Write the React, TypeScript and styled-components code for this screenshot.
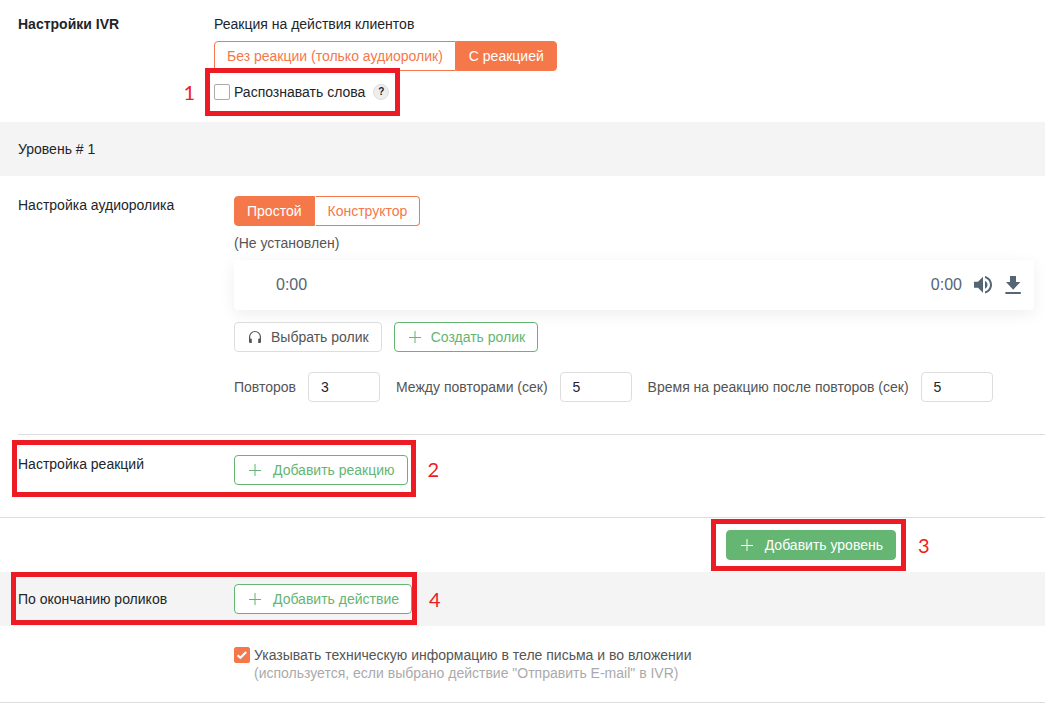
import React, { useState } from "react";
import styled, { createGlobalStyle, css } from "styled-components";

const color = {
  orange: "#f5784b",
  green: "#65b573",
  text: "#212529",
  muted: "#555555",
  hint: "#aaaaaa",
  line: "#dddddd",
  band: "#f4f4f4",
  player: "#566574",
  mark: "#ed1c24",
};

const GlobalStyle = createGlobalStyle`
  *, *::before, *::after { box-sizing: border-box; }
  body {
    margin: 0;
    background: #fff;
    color: ${color.text};
    font-family: "Liberation Sans", Arial, sans-serif;
    font-size: 14px;
    line-height: 18px;
  }
  button, input { font: inherit; color: inherit; margin: 0; }
  h1, h2, p { margin: 0; font-size: inherit; font-weight: inherit; }
`;

const Page = styled.main`
  min-width: 0;
`;

const Intro = styled.section`
  display: flex;
  padding: 15px 18px 21px;
`;

const Title = styled.h1`
  && {
    flex: 0 0 196px;
    font-weight: bold;
  }
`;

const IntroBody = styled.div`
  display: flex;
  flex-direction: column;
  align-items: flex-start;
`;

const WordsSlot = styled.div`
  display: flex;
  margin-top: 12px;
`;

const LevelBand = styled.header`
  padding: 18px;
  background: ${color.band};
`;

const Section = styled.section`
  display: flex;
  margin-left: 18px;
  padding: 20px 11px 32px 0;
`;

const AudioSection = styled(Section)`
  border-bottom: 1px solid ${color.line};
`;

const RowLabel = styled.h2`
  flex: 0 0 216px;
`;

const AudioBody = styled.div`
  flex: 1;
  min-width: 0;
  color: ${color.muted};
`;

const Segments = styled.div`
  display: flex;
`;

const IntroSegments = styled(Segments)`
  margin-top: 8px;
`;

const Segment = styled.button<{ $active: boolean }>`
  height: 30px;
  padding: 0 12px;
  border: 1px solid ${color.orange};
  background: ${(p) => (p.$active ? color.orange : "#fff")};
  color: ${(p) => (p.$active ? "#fff" : color.orange)};
  cursor: pointer;

  &:first-child { border-radius: 4px 0 0 4px; }
  &:last-child { border-radius: 0 4px 4px 0; }
  &:last-child:not([aria-pressed="true"]) { border-left-color: #fff; }
`;

const ClipName = styled.p`
  && { margin: 8px 0; }
`;

const Player = styled.div`
  display: flex;
  align-items: center;
  height: 50px;
  padding: 0 12px 0 42px;
  border-radius: 4px;
  background: #fff;
  box-shadow: 0 4px 16px rgba(0, 0, 0, 0.07);
  color: ${color.player};
  font-size: 16px;
`;

const Duration = styled.span`
  margin-left: auto;
`;

const IconButton = styled.button`
  display: flex;
  margin-left: 12px;
  padding: 0;
  border: 0;
  background: none;
  cursor: pointer;
`;

const ClipActions = styled.div`
  display: flex;
  gap: 12px;
  margin-top: 12px;
`;

type Tone = "plain" | "outline" | "solid";

const tones = {
  plain: css`
    border-color: ${color.line};
    background: #fff;
    color: ${color.muted};
  `,
  outline: css`
    border-color: ${color.green};
    background: #fff;
    color: ${color.green};
  `,
  solid: css`
    border-color: ${color.green};
    background: ${color.green};
    color: #fff;
  `,
};

const ActionButton = styled.button<{ $tone: Tone }>`
  display: inline-flex;
  align-items: center;
  gap: 8px;
  height: 30px;
  padding: 0 12px;
  border: 1px solid;
  border-radius: 4px;
  white-space: nowrap;
  cursor: pointer;
  ${(p) => tones[p.$tone]}
`;

const AddButton = styled(ActionButton)`
  gap: 10px;
`;

const Fields = styled.div`
  display: flex;
  flex-wrap: wrap;
  gap: 12px 16px;
  margin-top: 20px;
`;

const Field = styled.label`
  display: flex;
  align-items: center;
  gap: 12px;
`;

const NumberBox = styled.input`
  width: 72px;
  height: 30px;
  padding: 0 12px;
  border: 1px solid ${color.line};
  border-radius: 4px;
  background: #fff;
  color: ${color.text};
`;

const ReactionSection = styled.section`
  padding: 20px 18px 32px;
  border-bottom: 1px solid ${color.line};
`;

const AddLevelRow = styled.div`
  display: flex;
  justify-content: flex-end;
  padding: 12px 149px 12px 18px;
`;

const FinishBand = styled.section`
  padding: 12px 18px;
  background: ${color.band};
`;

const SettingRow = styled.div<{ $align: string }>`
  display: flex;
  align-items: ${(p) => p.$align};
`;

const TechInfo = styled.section`
  padding: 20px 18px 20px 234px;
  border-bottom: 1px solid ${color.line};
  color: ${color.muted};
`;

const CheckLabel = styled.label`
  display: inline-flex;
  align-items: flex-start;
  gap: 4px;
  cursor: pointer;
`;

const CheckFrame = styled.span`
  position: relative;
  display: flex;
  padding: 1px 0;
`;

const CheckInput = styled.input`
  appearance: none;
  width: 16px;
  height: 16px;
  border: 1px solid #aaaaaa;
  border-radius: 2px;
  background: #fff;

  &:checked {
    border-color: ${color.orange};
    background: ${color.orange};
  }
`;

const CheckMark = styled.svg`
  position: absolute;
  top: 1px;
  left: 0;
  pointer-events: none;
`;

const Hint = styled.span`
  display: block;
  color: ${color.hint};
`;

const HelpButton = styled.button`
  width: 16px;
  height: 16px;
  margin: 1px 0 1px 8px;
  padding: 0;
  border: 1px solid ${color.line};
  border-radius: 50%;
  background: #eeeeee;
  font-size: 10px;
  font-weight: bold;
  line-height: 14px;
  cursor: help;
`;

const Callout = styled.div`
  position: relative;
  display: flex;
`;

type Inset = { $top: number; $right: number; $bottom: number; $left: number };

const CalloutFrame = styled.div<Inset>`
  position: absolute;
  top: -${(p) => p.$top}px;
  right: -${(p) => p.$right}px;
  bottom: -${(p) => p.$bottom}px;
  left: -${(p) => p.$left}px;
  border: 5px solid ${color.mark};
  pointer-events: none;
`;

const CalloutNumber = styled.span<{ $before?: boolean }>`
  position: absolute;
  top: 50%;
  ${(p) => (p.$before ? "right: calc(100% + 15px);" : "left: calc(100% + 17px);")}
  transform: translateY(-50%);
  color: ${color.mark};
  font-family: Lato, sans-serif;
  font-size: 20px;
  line-height: 24px;
`;

function Marked(props: {
  number: number;
  inset: [number, number, number, number];
  before?: boolean;
  children: React.ReactNode;
}) {
  const [top, right, bottom, left] = props.inset;
  return (
    <Callout>
      {props.children}
      <CalloutFrame $top={top} $right={right} $bottom={bottom} $left={left}>
        <CalloutNumber $before={props.before}>{props.number}</CalloutNumber>
      </CalloutFrame>
    </Callout>
  );
}

function Check(props: { checked: boolean; onChange: (v: boolean) => void; children: React.ReactNode }) {
  return (
    <CheckLabel>
      <CheckFrame>
        <CheckInput
          type="checkbox"
          checked={props.checked}
          onChange={(e) => props.onChange(e.target.checked)}
        />
        {props.checked && (
          <CheckMark width="16" height="16" viewBox="0 0 16 16" aria-hidden="true">
            <path d="M3.6 8.2l2.8 2.6 5.8-5.8" fill="none" stroke="#fff" strokeWidth="2.2" />
          </CheckMark>
        )}
      </CheckFrame>
      <span>{props.children}</span>
    </CheckLabel>
  );
}

const PlusIcon = () => (
  <svg width="16" height="16" viewBox="0 0 16 16" aria-hidden="true">
    <path d="M8 2v12" stroke="currentColor" strokeWidth="2" opacity="0.5" />
    <path d="M2 8.5h12" stroke="currentColor" strokeWidth="1" />
  </svg>
);

const HeadphonesIcon = () => (
  <svg width="16" height="16" viewBox="0 0 16 16" aria-hidden="true">
    <path d="M2.6 11V7.8a5.4 5.3 0 0 1 10.8 0V11" fill="none" stroke="currentColor" strokeWidth="1.2" />
    <path d="M2 9.4h1.6q1.2 0 1.2 1.2v3.4H3.2Q2 14 2 12.8zM14 9.4h-1.6q-1.2 0-1.2 1.2v3.4h1.6q1.2 0 1.2-1.2z" fill="currentColor" />
  </svg>
);

const VolumeIcon = () => (
  <svg width="18" height="18" viewBox="0 0 24 24" aria-hidden="true">
    <path
      fill="currentColor"
      d="M14.667 0v2.747c3.853 1.146 6.666 4.72 6.666 8.946 0 4.227-2.813 7.787-6.666 8.934v2.76C20 22.173 24 17.4 24 11.693 24 5.987 20 1.213 14.667 0zM18 11.693c0-2.36-1.333-4.386-3.333-5.373v10.707c2-.947 3.333-2.987 3.333-5.334zm-18-4v8h5.333L12 22.36V1.027L5.333 7.693H0z"
    />
  </svg>
);

const DownloadIcon = () => (
  <svg width="18" height="18" viewBox="0 0 18 18" aria-hidden="true">
    <path fill="currentColor" d="M6 0h6v6h4.4L9.2 13.8 2 6h4zM1.4 16h15.4v2H1.4z" />
  </svg>
);

function Toggle(props: { as?: typeof Segments; label: string; options: string[]; initial: number }) {
  const [selected, setSelected] = useState(props.initial);
  const Group = props.as ?? Segments;
  return (
    <Group role="group" aria-label={props.label}>
      {props.options.map((option, i) => (
        <Segment
          key={option}
          type="button"
          $active={i === selected}
          aria-pressed={i === selected}
          onClick={() => setSelected(i)}
        >
          {option}
        </Segment>
      ))}
    </Group>
  );
}

const timings = [
  { label: "Повторов", value: "3" },
  { label: "Между повторами (сек)", value: "5" },
  { label: "Время на реакцию после повторов (сек)", value: "5" },
];

export default function App() {
  const [words, setWords] = useState(false);
  const [techInfo, setTechInfo] = useState(true);

  return (
    <Page>
      <GlobalStyle />
      <Intro>
        <Title>Настройки IVR</Title>
        <IntroBody>
          <p>Реакция на действия клиентов</p>
          <Toggle
            as={IntroSegments}
            label="Реакция на действия клиентов"
            options={["Без реакции (только аудиоролик)", "С реакцией"]}
            initial={1}
          />
          <WordsSlot>
            <Marked number={1} inset={[15, 11, 15, 9]} before>
              <Check checked={words} onChange={setWords}>
                Распознавать слова
              </Check>
              <HelpButton type="button" aria-label="Справка">
                ?
              </HelpButton>
            </Marked>
          </WordsSlot>
        </IntroBody>
      </Intro>

      <LevelBand>
        <h2>Уровень # 1</h2>
      </LevelBand>

      <AudioSection>
        <RowLabel>Настройка аудиоролика</RowLabel>
        <AudioBody>
          <Toggle label="Настройка аудиоролика" options={["Простой", "Конструктор"]} initial={0} />
          <ClipName>(Не установлен)</ClipName>
          <Player>
            <span>0:00</span>
            <Duration>0:00</Duration>
            <IconButton type="button" aria-label="Громкость">
              <VolumeIcon />
            </IconButton>
            <IconButton type="button" aria-label="Скачать">
              <DownloadIcon />
            </IconButton>
          </Player>
          <ClipActions>
            <ActionButton type="button" $tone="plain">
              <HeadphonesIcon />
              Выбрать ролик
            </ActionButton>
            <ActionButton type="button" $tone="outline">
              <PlusIcon />
              Создать ролик
            </ActionButton>
          </ClipActions>
          <Fields>
            {timings.map((t) => (
              <Field key={t.label}>
                {t.label}
                <NumberBox type="text" inputMode="numeric" defaultValue={t.value} />
              </Field>
            ))}
          </Fields>
        </AudioBody>
      </AudioSection>

      <ReactionSection>
        <SettingRow $align="flex-start">
          <Marked number={2} inset={[15, 8, 12, 6]}>
            <RowLabel>Настройка реакций</RowLabel>
            <AddButton type="button" $tone="outline">
              <PlusIcon />
              Добавить реакцию
            </AddButton>
          </Marked>
        </SettingRow>
      </ReactionSection>

      <AddLevelRow>
        <Marked number={3} inset={[11, 10, 11, 15]}>
          <AddButton type="button" $tone="solid">
            <PlusIcon />
            Добавить уровень
          </AddButton>
        </Marked>
      </AddLevelRow>

      <FinishBand>
        <SettingRow $align="center">
          <Marked number={4} inset={[12, 5, 11, 7]}>
            <SettingRow $align="center">
              <RowLabel>По окончанию роликов</RowLabel>
              <AddButton type="button" $tone="outline">
                <PlusIcon />
                Добавить действие
              </AddButton>
            </SettingRow>
          </Marked>
        </SettingRow>
      </FinishBand>

      <TechInfo>
        <Check checked={techInfo} onChange={setTechInfo}>
          Указывать техническую информацию в теле письма и во вложении
          <Hint>(используется, если выбрано действие "Отправить E-mail" в IVR)</Hint>
        </Check>
      </TechInfo>
    </Page>
  );
}
